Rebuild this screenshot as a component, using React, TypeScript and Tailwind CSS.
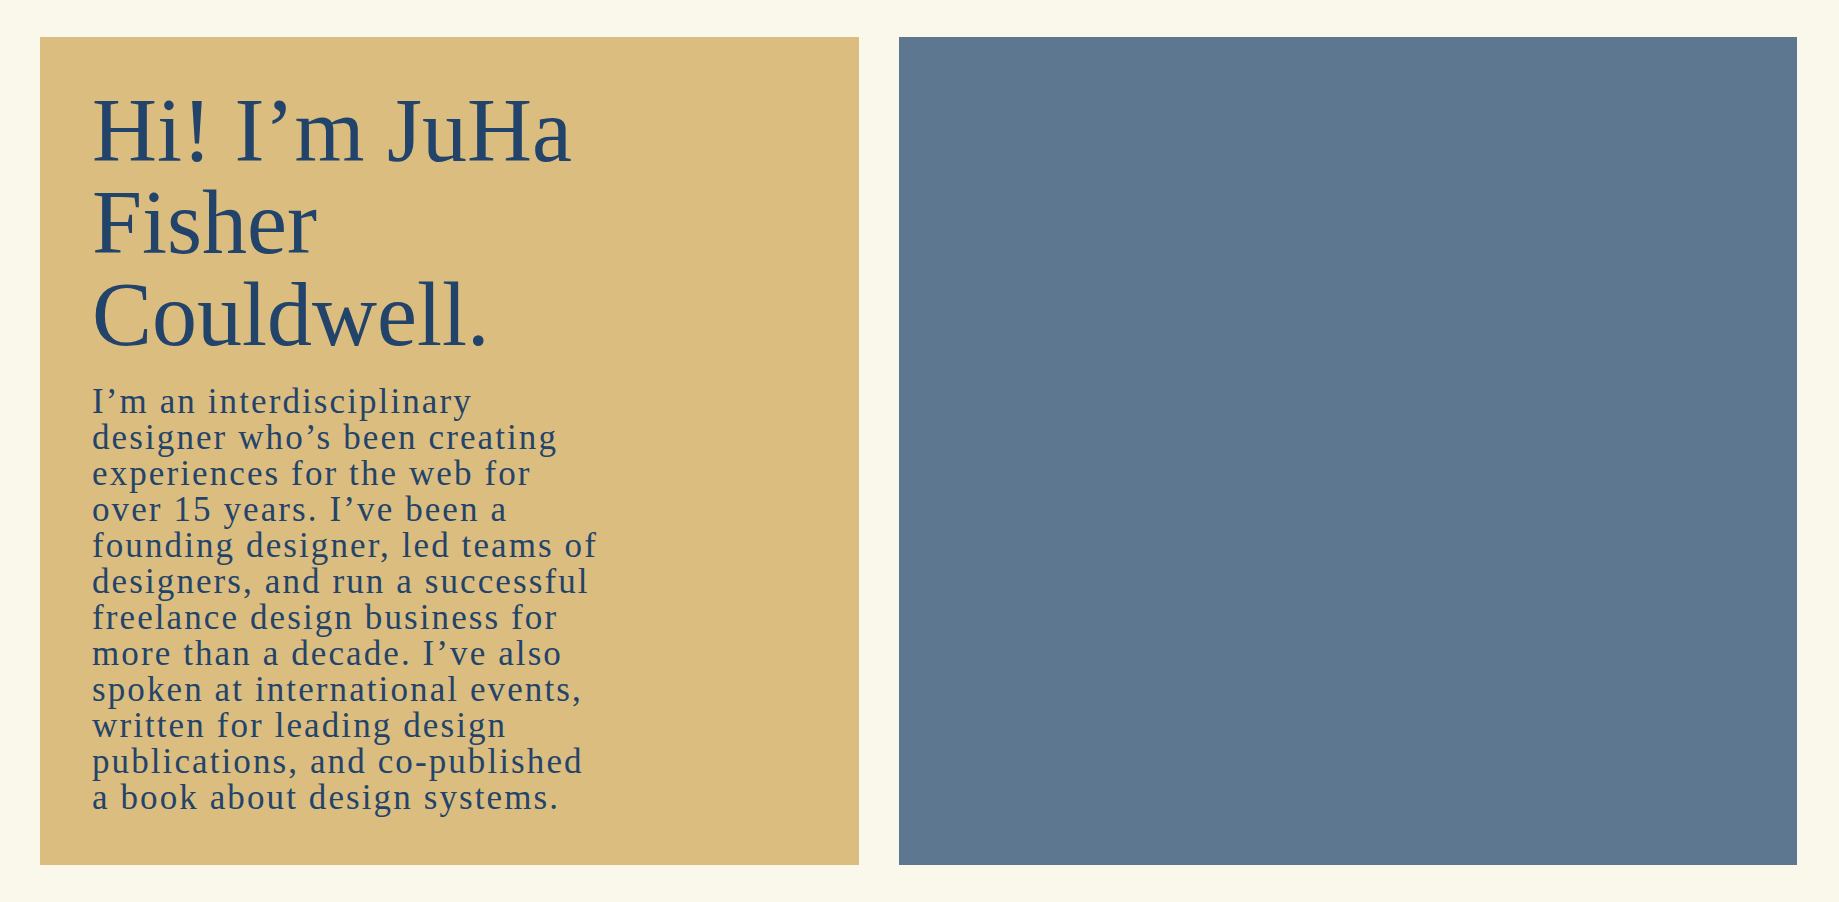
const bioLines = [
  'I’m an interdisciplinary',
  'designer who’s been creating',
  'experiences for the web for',
  'over 15 years. I’ve been a',
  'founding designer, led teams of',
  'designers, and run a successful',
  'freelance design business for',
  'more than a decade. I’ve also',
  'spoken at international events,',
  'written for leading design',
  'publications, and co-published',
  'a book about design systems.',
];

const App = () => {
  return (
    <div className="min-h-screen bg-[#faf7eb] flex gap-[40px] pl-[40px] pr-[42px] py-[37px]">
      {/* Intro panel */}
      <section className="w-[819px] h-[828px] shrink-0 bg-[#dbbd7f] pl-[52px] pt-[48px] text-[#23446a] font-['Liberation_Serif',serif]">
        <h1 className="text-[90px] leading-[92px] font-normal w-[600px]">
          Hi! I’m JuHa
          <br />
          Fisher
          <br />
          Couldwell.
        </h1>
        <p className="mt-[23px] text-[35px] leading-[36px] tracking-[0.06em] whitespace-nowrap">
          {bioLines.map((line, i) => (
            <span key={i}>
              {line}
              {i < bioLines.length - 1 && <br />}
            </span>
          ))}
        </p>
      </section>

      {/* Photo placeholder */}
      <section className="flex-1 h-[828px] bg-[#5e7791]" />
    </div>
  );
};

export default App;
